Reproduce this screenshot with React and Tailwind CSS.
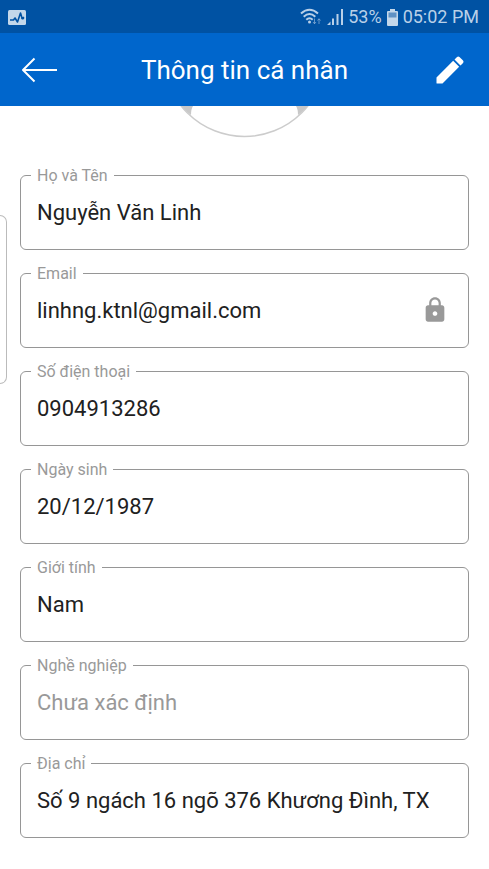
import { MdLock } from "react-icons/md";

const fields = [
  { id: "name", label: "Họ và Tên", value: "Nguyễn Văn Linh" },
  { id: "email", label: "Email", value: "linhng.ktnl@gmail.com", locked: true },
  { id: "phone", label: "Số điện thoại", value: "0904913286" },
  { id: "birthday", label: "Ngày sinh", value: "20/12/1987" },
  { id: "gender", label: "Giới tính", value: "Nam" },
  { id: "job", label: "Nghề nghiệp", value: "", placeholder: "Chưa xác định" },
  { id: "address", label: "Địa chỉ", value: "Số 9 ngách 16 ngõ 376 Khương Đình, TX" },
];

function StatusBar() {
  return (
    <div className="flex h-[33px] items-center justify-between bg-[#0052a3] pt-px pr-[10px] pl-2 text-[#b9d0e8]">
      <svg width="18" height="15" viewBox="0 0 18 15" aria-hidden="true">
        <rect width="18" height="15" rx="1.5" fill="#c3d7ea" />
        <path d="M2 10h3.500l1.500-2 2.500 4L12.500 3l1.700 5.500L16 7" fill="none" stroke="#0052a3" strokeWidth="1.6" strokeLinejoin="round" />
        <circle cx="14.800" cy="8.200" r="1.300" fill="#0052a3" />
      </svg>
      <div className="flex items-center gap-[5px] text-[18px] leading-6">
        <svg width="22" height="18" viewBox="0 0 22 18" fill="none" stroke="currentColor" strokeWidth="2" aria-hidden="true">
          <path d="M1 5.500Q9.500-2 18 5.500M3.700 8.700Q9.500 3.200 15.300 8.700M6.300 11.700Q9.500 8.700 12.700 11.700" />
          <circle cx="9.500" cy="14" r="1.500" fill="currentColor" stroke="none" />
          <path d="M14.500 10.500v5M13 14l1.500 1.800L16 14M19 16v-5M17.500 12.500L19 10.700l1.500 1.800" strokeWidth="1" opacity=".55" />
        </svg>
        <svg width="16" height="16" viewBox="0 0 16 16" fill="currentColor" aria-hidden="true">
          <path d="M0 16l3.500-3.500V16zM5 9.500h2V16H5zM9.500 5h2v11h-2zM14 0h2v16h-2z" />
        </svg>
        <span>53%</span>
        <svg width="11" height="17" viewBox="0 0 11 17" aria-hidden="true">
          <path d="M3 0h5v2h2a1 1 0 0 1 1 1v13a1 1 0 0 1-1 1H1a1 1 0 0 1-1-1V3a1 1 0 0 1 1-1h2z" fill="#c3d7ea" />
          <path d="M1.500 3.500h8v5h-8z" fill="#5f91c4" />
        </svg>
        <span>05:02 PM</span>
      </div>
    </div>
  );
}

function Header() {
  return (
    <header className="flex h-[73px] items-center justify-between bg-[#0066cc] pr-[21px] pl-[21px] text-white">
      <button type="button" aria-label="Quay lại" className="w-10">
        <svg width="37" height="26" viewBox="0 0 37 26" fill="none" stroke="currentColor" strokeWidth="2" aria-hidden="true">
          <path d="M36 13H2M13.500 1.500L2 13l11.500 11.500" strokeLinejoin="round" />
        </svg>
      </button>
      <h1 className="pt-px text-[26px] leading-8">Thông tin cá nhân</h1>
      <button type="button" aria-label="Chỉnh sửa" className="flex w-10 justify-end">
        <svg width="36" height="36" viewBox="0 0 24 24" fill="currentColor" aria-hidden="true">
          <path d="M3 17v3.600q0 .4.400.4H7L18.100 9.900l-4-4zM20.700 7.300q.7-.8 0-1.600l-2.400-2.400q-.8-.7-1.600 0l-1.700 1.700 4 4z" />
        </svg>
      </button>
    </header>
  );
}

function Field({ id, label, value, placeholder, locked }) {
  return (
    <div className="h-[75px] rounded-[6px] border border-[#969696]">
      <label htmlFor={id} className="-mt-[10px] ml-[10px] block w-fit bg-white px-[6px] text-[16px] leading-5 text-[#999]">
        {label}
      </label>
      <div className="flex items-center pt-2 pr-[19px] pl-4">
        <input
          id={id}
          readOnly
          defaultValue={value}
          placeholder={placeholder}
          className="h-9 min-w-0 flex-1 bg-transparent text-[22px] text-[#212121] outline-none placeholder:text-[#999]"
        />
        {locked && <MdLock size={28} className="text-[#999]" />}
      </div>
    </div>
  );
}

export default function App() {
  return (
    <div className="relative min-h-screen bg-white font-['Roboto','Noto_Sans',sans-serif]">
      <StatusBar />
      <Header />
      <main>
        <div className="flex h-[69px] justify-center">
          <svg width="167" height="32" viewBox="0 0 167 32" aria-hidden="true">
            <path d="M20 0h12q-2 3-2 9-6-4-10-9zM147 0h-12q2 3 2 9 6-4 10-9z" fill="#c8c8c8" />
            <circle cx="83.500" cy="-50.500" r="81" fill="none" stroke="#ccc" strokeWidth="1.500" />
          </svg>
        </div>
        <form className="flex flex-col gap-[23px] px-5 pb-8">
          {fields.map((field) => (
            <Field key={field.id} {...field} />
          ))}
        </form>
      </main>
      <div className="absolute top-[215px] left-0 h-[169px] w-[7px] rounded-r-[7px] border border-l-0 border-[#bbb] bg-white" />
    </div>
  );
}
